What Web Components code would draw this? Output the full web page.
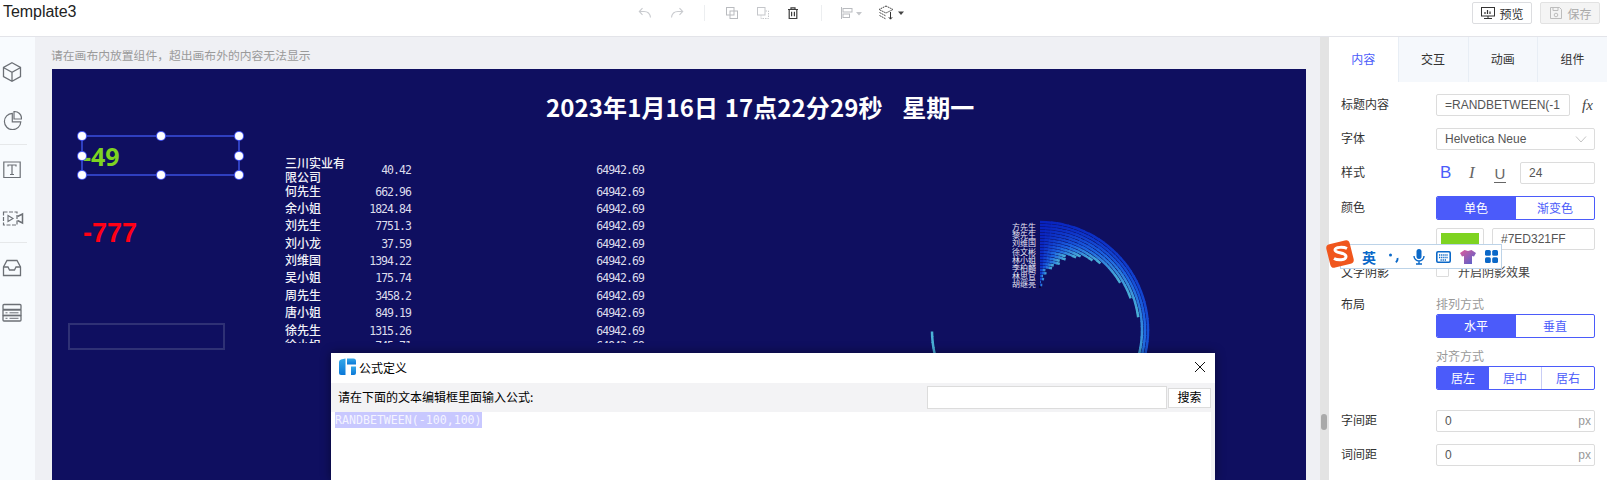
<!DOCTYPE html>
<html lang="zh">
<head>
<meta charset="utf-8">
<title>Template3</title>
<style>
html,body{margin:0;padding:0;width:1607px;height:480px;overflow:hidden;background:#fff;font-family:"Liberation Sans","Noto Sans CJK SC",sans-serif;font-size:12px;color:#333}
</style>
</head>
<body>
<app-shell></app-shell>
<script>
const FONT='"Liberation Sans","Noto Sans CJK SC",sans-serif';
function def(name,css,html,setup){
  customElements.define(name,class extends HTMLElement{
    constructor(){super();const r=this.attachShadow({mode:'open'});
      r.innerHTML='<style>'+css+'</style>'+(typeof html==='function'?html(this):html);}
    connectedCallback(){if(setup&&!this._d){this._d=1;setup(this,this.shadowRoot);}}
  });
}
const ic=(w,h,body,extra='')=>`<svg width="${w}" height="${h}" viewBox="0 0 ${w} ${h}" fill="none" ${extra}>${body}</svg>`;

/* ---------- top bar ---------- */
def('top-bar',`
:host{display:flex;height:36px;border-bottom:1px solid #e3e4e9;box-sizing:content-box;background:#fff;flex:none}
.title{font:16px ${FONT};color:#222;margin:3px 0 0 3px;width:629px;line-height:18px;letter-spacing:-.05px}
.tools{display:flex;align-items:center;height:26px}
.sep{width:1px;height:16px;background:#eceef0}
.right{margin-left:auto;display:flex;gap:8px;padding:2px 7px 0 0;align-items:flex-start}
.btn{display:flex;align-items:center;justify-content:center;gap:3px;width:60px;height:22px;box-sizing:border-box;border:1px solid #dcdde0;border-radius:2px;font-size:12px;color:#333;background:#fff}
.btn.off{background:#f4f4f4;color:#aaa;border-color:#e2e2e2}
svg{display:block}
`,`
<div class="title">Template3</div>
<div class="tools">
 <span style="width:4px"></span>
 ${ic(18,18,'<path d="M14.5 13.5C14 9.5 11 7.5 8 7.5H3.5M6.5 4.2 3.3 7.5l3.2 3.3" stroke="#c9cbcf" stroke-width="1.1"/>')}
 <span style="width:14px"></span>
 ${ic(18,18,'<path d="M3.5 13.5C4 9.5 7 7.5 10 7.5h4.5M11.5 4.2l3.2 3.3-3.2 3.3" stroke="#c9cbcf" stroke-width="1.1"/>')}
 <span style="width:18px"></span><span class="sep"></span><span style="width:19px"></span>
 ${ic(16,16,'<rect x="2.5" y="2.5" width="7.5" height="7.5" stroke="#b9bbbf"/><rect x="6" y="6" width="7.5" height="7.5" stroke="#b9bbbf"/>')}
 <span style="width:15px"></span>
 ${ic(16,16,'<rect x="2.5" y="2.5" width="7.5" height="7.5" stroke="#c4c6ca"/><path d="M10.5 6h3v7.5H6v-3" stroke="#c4c6ca" stroke-dasharray="1.5 1"/>')}
 <span style="width:14px"></span>
 ${ic(16,16,'<path d="M3 4.5h10M6 4.5V2.8h4v1.7M4.2 4.5v9h7.6v-9M6.6 6.8v4.5M9.4 6.8v4.5" stroke="#3d3d3d" stroke-width="1.2"/>')}
 <span style="width:20px"></span><span class="sep"></span><span style="width:17px"></span>
 ${ic(16,16,'<path d="M2.5 2v12" stroke="#b9bbbf"/><rect x="4" y="3.5" width="9" height="3.5" stroke="#b9bbbf"/><rect x="4" y="9" width="6.5" height="3.5" stroke="#b9bbbf"/>')}
 ${ic(8,16,'<path d="M1 7h6L4 10.5z" fill="#c4c6ca"/>')}
 <span style="width:14px"></span>
 ${ic(20,18,'<path d="M9 2 16 5.5 9 9 2 5.5zM2.5 8.5 9 12M2.500 11.500 9 15" stroke="#444" stroke-width="1" stroke-dasharray="1.6 .7"/><path d="M13.500 8v7M11.800 13.200l1.700 2 1.700-2" stroke="#333" stroke-width="1"/>')}
 ${ic(8,16,'<path d="M1 6.5h6L4 10z" fill="#444"/>')}
</div>
<div class="right">
 <div class="btn">${ic(16,16,'<rect x="1.5" y="2.5" width="13" height="8.5" stroke="#333"/><path d="M8 11v2.500M4 13.500h8" stroke="#333"/><path d="M5 9V7M7.500 9V5M10 9V6.500" stroke="#333" stroke-width="1.2"/>')}<span>预览</span></div>
 <div class="btn off">${ic(16,16,'<path d="M2.5 2.5h9l2 2v9h-11z" stroke="#bdbdbd"/><path d="M5 2.5v3h5v-3" stroke="#bdbdbd"/><circle cx="8" cy="10" r="1.8" stroke="#bdbdbd"/>')}<span>保存</span></div>
</div>`);

/* ---------- left rail ---------- */
def('side-rail',`
:host{display:flex;flex-direction:column;width:35px;background:#f8fbfe;flex:none;padding-top:25px;box-sizing:border-box}
.i{height:20px;padding-left:2px;margin-bottom:28px}
.d{height:1px;width:27px;background:#e6e8ea;margin:-14px 0 15px;flex:none}
svg{display:block}
`,`
<div class="i">${ic(20,20,'<path d="M10 .8 18.5 5.5v9L10 19.2 1.5 14.5v-9zM1.800 5.700 10 10.200l8.200-4.500M10 10.200v8.800" stroke="#6c7076" stroke-width="1.3"/>')}</div>
<div class="i">${ic(20,20,'<path d="M10.300 3.300A8.200 8.200 0 1 0 18.800 11.800h-8.500z" stroke="#6c7076" stroke-width="1.2"/><path d="M12 1.500a7 7 0 0 1 7.500 7.500H12z" stroke="#6c7076" stroke-width="1.2"/>')}</div>
<div class="d"></div>
<div class="i">${ic(20,20,'<path d="M5 2H1.800v15.500H5M15 2h3.200v15.500H15M5 2h10M5 17.500h10" stroke="#6c7076" stroke-width="1.2"/><path d="M6 6.500V5h8v1.500M10 5v9.500M8 14.500h4" stroke="#6c7076" stroke-width="1.2"/>')}</div>
<div class="i">${ic(22,20,'<path d="M1.500 4h13.500v13H1.500z" stroke="#6c7076" stroke-width="1.2" stroke-dasharray="4 1.5"/><path d="M6 7.500v6l5-3z" stroke="#6c7076" stroke-width="1.1"/><path d="M15.500 8.500 20.500 6v9l-5-2.500" stroke="#6c7076" stroke-width="1.5"/>')}</div>
<div class="d"></div>
<div class="i" style="margin-bottom:25px">${ic(20,20,'<path d="M5 2.500h10l3.500 6.500v8.500H1.500V9z" stroke="#6c7076" stroke-width="1.3"/><path d="M1.500 9H6l1.500 3h5L14 9h4.500" stroke="#6c7076" stroke-width="1.3"/>')}</div>
<div class="i">${ic(20,20,'<rect x="1" y="1.5" width="18" height="5" rx="1" stroke="#6c7076" stroke-width="1.3"/><rect x="1" y="7" width="18" height="5.5" stroke="#6c7076" stroke-width="1.3"/><rect x="1" y="12.5" width="18" height="5.5" rx="1" stroke="#6c7076" stroke-width="1.3"/><path d="M3.500 9.800h2M7.500 9.800h9M3.500 15.300h2M7.500 15.300h9" stroke="#6c7076"/>')}</div>
`);

/* ---------- canvas pieces ---------- */
def('selection-box',`
:host{position:absolute;left:29px;top:66px;width:159px;height:41px;box-sizing:border-box;border:2px solid #2f3fc0;display:flex;align-items:center}
.text{font:700 25px "Noto Sans",sans-serif;color:#7ed321;line-height:30px}
i{position:absolute;width:8px;height:8px;background:#fff;border-radius:50%;box-shadow:0 0 0 1px #4a5bf6;margin:-4px 0 0 -4px}
`,`<span class="text"><slot></slot></span>
<i style="left:-1px;top:-1px"></i><i style="left:50%;top:-1px"></i><i style="left:calc(100% + 1px);top:-1px"></i>
<i style="left:-1px;top:50%"></i><i style="left:calc(100% + 1px);top:50%"></i>
<i style="left:-1px;top:calc(100% + 1px)"></i><i style="left:50%;top:calc(100% + 1px)"></i><i style="left:calc(100% + 1px);top:calc(100% + 1px)"></i>`);

def('data-table',`
:host{position:absolute;left:233px;top:86.5px;width:360px;height:187.5px;overflow:hidden;display:flex;flex-direction:column;color:#e6e6f2}
.r{display:grid;grid-template-columns:62px 64px 233px;align-items:baseline;height:17.4px;flex:none}
.r.first{height:28px;align-items:center}
.r.last{margin-top:-2px}
.n{font:500 12px/14px "Noto Sans CJK SC",sans-serif;color:#f2f2f8}
.v{font:11.5px/14px "DejaVu Sans Mono",monospace;letter-spacing:-.95px;text-align:right;color:#dcdcec}
`,()=>{
 const d=[['三川实业有限公司','40.42'],['何先生','662.96'],['余小姐','1824.84'],['刘先生','7751.3'],['刘小龙','37.59'],['刘维国','1394.22'],['吴小姐','175.74'],['周先生','3458.2'],['唐小姐','849.19'],['徐先生','1315.26'],['徐小姐','745.71']];
 return d.map((x,i)=>`<div class="r${i?'':' first'}${i==10?' last':''}"><span class="n">${x[0]}</span><span class="v">${x[1]}</span><span class="v">64942.69</span></div>`).join('');
});

def('radial-chart',`
:host{position:absolute;left:868px;top:141px;width:240px;height:240px;display:block}
svg{display:block;position:absolute;inset:0}
.l{position:absolute;right:124px;top:13px;display:flex;flex-direction:column;align-items:flex-end}
.l span{font:8px/8.2px "Noto Sans CJK SC",sans-serif;color:#e8e8f4;white-space:nowrap}
`,`<svg width="240" height="240" viewBox="-120 -120 240 240" fill="none"></svg>
<div class="l"></div>`,(h,r)=>{
 const l=r.querySelector('.l');
 l.innerHTML=['方先生','黎先生','刘维国','徐文彬','林小姐','李柏麟','林思官','胡继亮'].map(t=>`<span>${t}</span>`).join('');
 const tbl=[[44,1],[48,2],[60,6],[67,14],[78,20],[86,33],[90,43],[92.6,56],[95.5,70],[99,81],[101,102],[104,150],[106,200],[108,270]];
 const endA=R=>{for(let i=1;i<tbl.length;i++){if(R<=tbl[i][0]){const [a,b]=tbl[i-1],[c,d]=tbl[i];return b+(d-b)*(R-a)/(c-a);}}return 270;};
 const lerp=(a,b,t)=>a.map((v,i)=>Math.round(v+(b[i]-v)*t));
 const col=t=>{const A=[8,34,190],B=[28,100,225],C=[76,178,214];const c=t<.5?lerp(A,B,t*2):lerp(B,C,(t-.5)*2);return `rgb(${c})`;};
 let out='<path d="M0 -42v-2.5" stroke="#000" stroke-width="1"/>';
 for(let R=108;R>=45;R-=3){
  const e=endA(R)+(R%2?2:-1)*.8;
  const n=Math.max(2,Math.ceil(e/3));
  for(let i=0;i<n;i++){
   const a0=e*i/n,a1=e*(i+1)/n+(i<n-1?.5:0);
   const p=a=>{const q=a*Math.PI/180;return (R*Math.sin(q)).toFixed(2)+' '+(-R*Math.cos(q)).toFixed(2)};
   out+=`<path d="M${p(a0)}A${R} ${R} 0 0 1 ${p(a1)}" stroke="${col((i+.5)/n)}" stroke-width="2.5"/>`;
  }
 }
 r.querySelector('svg').innerHTML=out;
});

def('art-board',`
:host{display:block;position:relative;background:#0f0f60;flex:1;margin:0 14px 0 17px;overflow:hidden}
.t{position:absolute;left:494px;top:20px;font:700 24px/36px "Noto Sans CJK SC",sans-serif;color:#fff;white-space:pre;letter-spacing:.1px;word-spacing:1px}
.m{position:absolute;left:31px;top:146px;font:700 27px/36px "Liberation Sans",sans-serif;color:#ff0015}
.e{position:absolute;left:16px;top:254px;width:157px;height:27px;box-sizing:border-box;border:2px solid #2f3175}
`,`<div class="t">2023年1月16日 17点22分29秒   星期一</div>
<selection-box>-49</selection-box>
<div class="m">-777</div>
<div class="e"></div>
<data-table></data-table>
<radial-chart></radial-chart>`);

def('canvas-area',`
:host{display:flex;flex-direction:column;flex:1;min-width:0;background:#eff0f4}
.h{height:32px;padding:10px 0 0 16px;box-sizing:border-box;font:11.8px/16px "Noto Sans CJK SC",sans-serif;color:#9a9a9a}
`,`<div class="h">请在画布内放置组件，超出画布外的内容无法显示</div><art-board></art-board>`);

def('scroll-gutter',`
:host{display:block;position:relative;width:9px;flex:none;background:#e3e3e3}
i{position:absolute;left:1px;top:377px;width:6px;height:16px;border-radius:3px;background:#a9a9a9}
`,`<i></i>`);

/* ---------- properties panel ---------- */
def('seg-control',`
:host{display:flex;height:24px;box-sizing:border-box;border:1px solid #4b5bfa;border-radius:2px;overflow:hidden;font:12px/22px "Noto Sans CJK SC",sans-serif;color:#4b5bfa;background:#fff}
::slotted(span){flex:1;text-align:center}
`,`<slot></slot>`);

def('text-box',`
:host{display:flex;align-items:center;height:22px;box-sizing:border-box;border:1px solid #dcdcdc;border-radius:2px;padding:0 3px 0 8px;font:12px "Liberation Sans",sans-serif;color:#555;background:#fff;white-space:nowrap;overflow:hidden}
::slotted([slot=end]){margin-left:auto;color:#999}
`,`<slot></slot><slot name="end"></slot>`);

def('form-row',`
:host{display:grid;grid-template-columns:95px 159px;align-items:center}
.lb{font:12px/16px "Noto Sans CJK SC",sans-serif;color:#333;padding-bottom:var(--lb-pb,3px)}
`,`<div class="lb"><slot name="label"></slot></div><div class="c"><slot></slot></div>`);

def('prop-panel',`
:host{display:flex;flex-direction:column;width:278px;flex:none;background:#fff;font:12px "Noto Sans CJK SC",sans-serif;color:#333}
.tabs{display:flex;height:45px;flex:none;background:#f5f8fc;margin-bottom:12px}
.tabs span{flex:1;text-align:center;border-left:1px solid #e8eef5;font:12px/44px "Noto Sans CJK SC",sans-serif;color:#333}
.tabs span.on{background:#fff;color:#4b5bfa;border-left:0}
form-row{margin-left:12px;flex:none}
.hb{display:flex;align-items:center}
.b{font:17px "Liberation Sans",sans-serif;color:#4b5bfa;width:28px;padding-left:4px;box-sizing:border-box}
.it{font:italic 17px "Liberation Serif",serif;color:#666;width:28px;padding-left:5px;box-sizing:border-box}
.u{font:15px "Liberation Sans",sans-serif;color:#666;width:28px;padding-left:2px;box-sizing:border-box}
.u b{font-weight:400;border-bottom:1px solid #666;padding:0 .5px}
.sw{width:48px;height:22px;box-sizing:border-box;border:1px solid #dcdcdc;border-radius:2px;padding:4px 4px 0;flex:none;margin-right:8px}
.sw i{display:block;height:100%;background:#7ed321}
.cb{width:13px;height:13px;box-sizing:border-box;border:1px solid #dcdcdc;border-radius:1px;margin-right:9px;flex:none;align-self:flex-start}
.g{font:12px/16px "Noto Sans CJK SC",sans-serif;color:#999;margin-bottom:2px}
`,`
<div class="tabs"><span class="on">内容</span><span>交互</span><span>动画</span><span>组件</span></div>
<form-row><span slot="label">标题内容</span><div style="display:flex;align-items:center"><text-box style="width:134px">=RANDBETWEEN(-1</text-box><span style="font:italic 15px 'Liberation Serif',serif;color:#444;margin-left:12px">fx</span></div></form-row>
<form-row style="margin-top:12px"><span slot="label">字体</span><text-box>Helvetica Neue<svg slot="end" width="12" height="12" viewBox="0 0 12 12" fill="none" style="margin-right:4px"><path d="M1 3.5 6 9l5-5.5" stroke="#c4c4c4"/></svg></text-box></form-row>
<form-row style="margin-top:12px"><span slot="label">样式</span><div class="hb" style="width:159px"><span class="b">B</span><span class="it">I</span><span class="u"><b>U</b></span><text-box style="width:75px">24</text-box></div></form-row>
<form-row style="margin-top:12px"><span slot="label">颜色</span><seg-control><span style="background:#4b5bfa;color:#fff">单色</span><span style="border-left:1px solid #4b5bfa">渐变色</span></seg-control></form-row>
<form-row style="margin-top:8px"><span slot="label"></span><div class="hb"><span class="sw"><i></i></span><text-box style="flex:1">#7ED321FF</text-box></div></form-row>
<form-row style="margin-top:14px;height:16px;--lb-pb:0"><span slot="label">文字阴影</span><div class="hb"><span class="cb"></span><span style="color:#444;line-height:16px">开启阴影效果</span></div></form-row>
<form-row style="margin-top:16px;align-items:start;--lb-pb:0"><span slot="label">布局</span><div>
 <div class="g">排列方式</div>
 <seg-control><span style="background:#4b5bfa;color:#fff">水平</span><span style="border-left:1px solid #4b5bfa">垂直</span></seg-control>
 <div class="g" style="margin-top:10px">对齐方式</div>
 <seg-control><span style="flex:none;width:52px;background:#4b5bfa;color:#fff">居左</span><span style="border-right:1px solid #c8cdf5">居中</span><span>居右</span></seg-control>
</div></form-row>
<form-row style="margin-top:20px;--lb-pb:2px"><span slot="label">字间距</span><text-box>0<span slot="end">px</span></text-box></form-row>
<form-row style="margin-top:12px;--lb-pb:2px"><span slot="label">词间距</span><text-box>0<span slot="end">px</span></text-box></form-row>
`);

/* ---------- formula dialog ---------- */
def('formula-dialog',`
:host{position:absolute;left:331px;top:353px;width:884px;height:127px;background:#fff;box-shadow:0 0 10px rgba(0,0,0,.45);display:flex;flex-direction:column;font:12px "Noto Sans CJK SC",sans-serif;color:#000}
.tb{height:30px;display:flex;align-items:center;padding:0 0 2px 8px;box-sizing:border-box;gap:3px;flex:none}
.tb .x{margin-left:auto;margin-right:9px}
.bar{height:29px;background:#f3f3f5;display:flex;align-items:center;padding:0 4px 0 7px;flex:none}
.q{padding-bottom:2px}
.s{margin-left:auto;width:240px;height:23px;box-sizing:border-box;background:#fff;border:1px solid #dcdcdc}
.bt{width:43px;height:20px;box-sizing:border-box;background:#fff;border:1px solid #dcdcdc;text-align:center;line-height:16px;margin-left:1px}
.ed{flex:1;background:#fff;margin-right:4px;box-shadow:4px 0 0 #f3f3f5;padding-left:4px}
.ed span{display:inline-block;background:#c8c8ff;color:#f4f4ff;font:11.6px/16px "DejaVu Sans Mono",monospace;height:16px;vertical-align:top}
svg{display:block}
`,`
<div class="tb">${ic(17,18,'<defs><linearGradient id="lg" x1="0" y1="0" x2="0" y2="1"><stop offset="0" stop-color="#35a8e8"/><stop offset="1" stop-color="#0a78d8"/></linearGradient></defs><path d="M0 4 Q0 2 2 1.500L6.500 .5V17H2Q0 17 0 15z" fill="url(#lg)"/><path d="M8 .5h6.500Q17 .5 17 3v3.500H8z" fill="url(#lg)"/><path d="M12 8.500h5V15Q17 17 15 17h-3z" fill="url(#lg)"/>')}<span>公式定义</span>
 <svg class="x" width="12" height="12" viewBox="0 0 12 12" fill="none"><path d="M1 1l10 10M11 1 1 11" stroke="#111"/></svg></div>
<div class="bar"><span class="q">请在下面的文本编辑框里面输入公式:</span><div class="s"></div><div class="bt">搜索</div></div>
<div class="ed"><span>RANDBETWEEN(-100,100)</span></div>
`);

/* ---------- IME bar ---------- */
def('ime-bar',`
:host{position:absolute;left:1325px;top:239px;width:177px;height:30px;display:block}
.box{position:absolute;left:15px;top:5px;right:0;height:25px;background:#fff;border:1px solid #bcd3e8;box-sizing:border-box;display:flex;align-items:center;padding-left:21px}
.en{font:700 14px "Noto Sans CJK SC",sans-serif;color:#0a68c8;line-height:18px;width:26px}
.logo{position:absolute;left:0;top:0}
svg{display:block;flex:none}
`,`
<div class="box"><span class="en">英</span>
 ${ic(12,14,'<circle cx="2.5" cy="5" r="1.5" fill="#0a68c8"/><path d="M9.5 8c.3 2-.5 3.500-1.700 4.300" stroke="#0a68c8" stroke-width="1.8"/>')}
 <span style="width:13px"></span>
 ${ic(12,16,'<rect x="3.5" y="0" width="5" height="10" rx="2.5" fill="#0a68c8"/><path d="M1 7a5 5 0 0 0 10 0M6 12v3M3 15h6" stroke="#0a68c8" stroke-width="1.4"/>')}
 <span style="width:11px"></span>
 ${ic(15,12,'<rect x=".8" y=".8" width="13.4" height="10.4" rx="1.2" stroke="#0a68c8" stroke-width="1.6"/><path d="M3 4h9M3 6.500h9M4.500 9h6" stroke="#0a68c8" stroke-width="1.4" stroke-dasharray="1.3 .8"/>')}
 <span style="width:9px"></span>
 ${ic(16,16,'<defs><linearGradient id="sh" x1="0" y1="0" x2="1" y2="1"><stop offset="0" stop-color="#e05a9a"/><stop offset="1" stop-color="#4a62d0"/></linearGradient></defs><path d="M4.500 1 8 2l3.500-1L16 4l-2 3.500-2-.5v8H4V7l-2 .5L0 4z" fill="url(#sh)"/>')}
 <span style="width:9px"></span>
 ${ic(13,13,'<rect width="5.8" height="5.8" rx="1.5" fill="#0a68c8"/><rect x="7.2" width="5.8" height="5.8" rx="1.5" fill="#0a68c8"/><rect y="7.2" width="5.8" height="5.8" rx="1.5" fill="#0a68c8"/><rect x="7.2" y="7.2" width="5.8" height="5.8" rx="1.5" fill="#0a68c8"/>')}
</div>
<svg class="logo" width="30" height="30" viewBox="0 0 30 30"><rect x="3" y="3" width="24" height="24" rx="4" transform="rotate(-14 15 15)" fill="#f0561d"/><path d="M22 9.500c-3-1.500-12-2-12 1.500 0 3.500 11 2 11 6.500 0 4-8.500 4-12 2" stroke="#fff" stroke-width="3" fill="none"/></svg>
`);

/* ---------- shell ---------- */
def('app-shell',`
:host{display:flex;flex-direction:column;width:1607px;height:480px;position:relative;overflow:hidden}
.main{display:flex;flex:1;min-height:0}
`,`<top-bar></top-bar>
<div class="main"><side-rail></side-rail><canvas-area></canvas-area><scroll-gutter></scroll-gutter><prop-panel></prop-panel></div>
<formula-dialog></formula-dialog>
<ime-bar></ime-bar>`);
</script>
</body>
</html>
